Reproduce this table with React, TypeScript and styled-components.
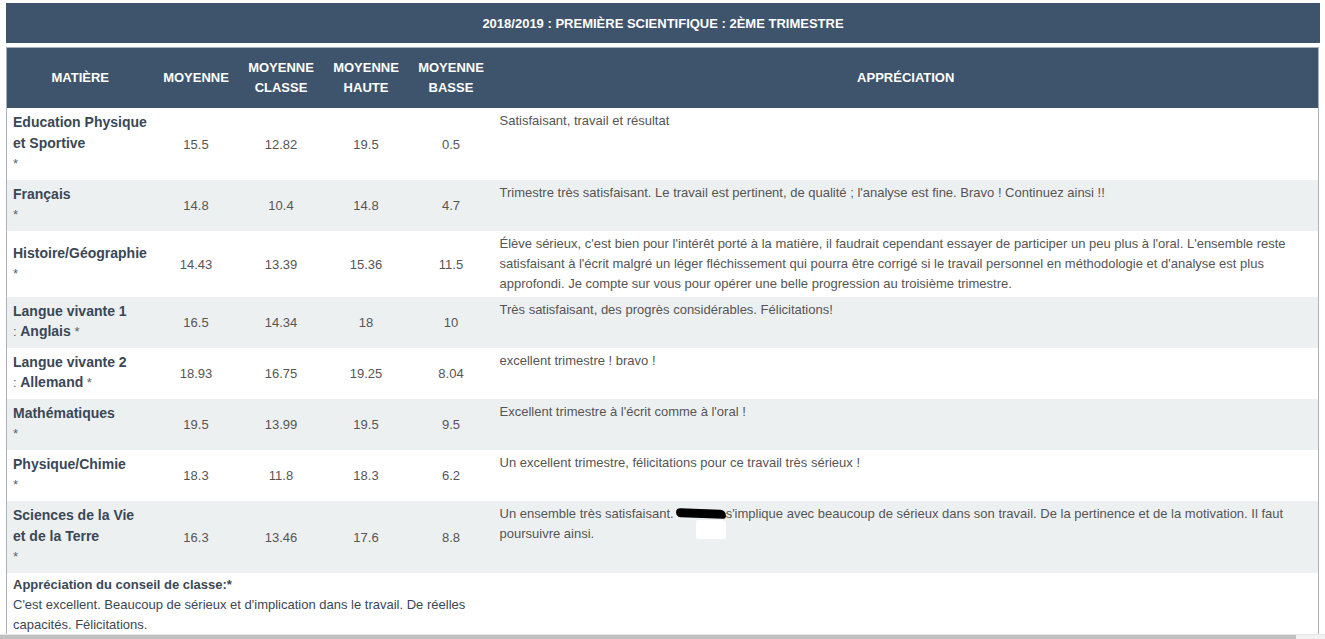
import React from "react";
import styled, { createGlobalStyle } from "styled-components";

const Global = createGlobalStyle`
  html, body { margin: 0; padding: 0; background: #fff; }
  body { font-family: "Liberation Sans", Arial, sans-serif; overflow: hidden; }
`;

const Page = styled.div`
  height: 639px;
  display: flex;
  flex-direction: column;
`;

const Content = styled.div`
  flex: 1;
  overflow: hidden;
  padding: 3px 6px 0 6px;
`;

const TitleBar = styled.div`
  height: 40px;
  width: 1314px;
  background: #3e546c;
  color: #fff;
  font-family: "Liberation Sans Narrow", "Liberation Sans", sans-serif;
  font-weight: bold;
  font-size: 13px;
  display: flex;
  align-items: center;
  justify-content: center;
`;

const Table = styled.table`
  margin-top: 4px;
  width: 1313px;
  table-layout: fixed;
  border-collapse: collapse;
  border: 1px solid #a9b1bc;
  border-bottom: none;
`;

const Th = styled.th<{ $narrow?: boolean }>`
  background: #3e546c;
  color: #fff;
  font-weight: bold;
  font-size: 13px;
  text-transform: uppercase;
  line-height: 20px;
  height: 60px;
  padding: 0 4px;
  text-align: center;
  vertical-align: middle;
  font-family: ${(p) =>
    p.$narrow ? `"Liberation Sans Narrow", "Liberation Sans", sans-serif` : "inherit"};
`;

const Tr = styled.tr<{ $alt?: boolean }>`
  background: ${(p) => (p.$alt ? "#edf0f1" : "#fff")};
`;

const SubjectCell = styled.td`
  padding: 4px 6px 6px 6px;
  vertical-align: middle;
  font-size: 13px;
  line-height: 20px;
  color: #3a4756;
`;

const SubjectName = styled.div`
  font-weight: bold;
  font-size: 14px;
  line-height: 20px;
  & + & {
    margin-top: 1px;
  }
`;

const Star = styled.div`
  color: #5a6470;
  line-height: 21px;
  b {
    color: #3a4756;
    font-size: 14px;
  }
`;

const NumCell = styled.td`
  text-align: center;
  vertical-align: middle;
  font-size: 13px;
  color: #555;
  padding: 0 4px;
`;

const ApprCell = styled.td`
  vertical-align: top;
  padding: 3px 6px 3px 6px;
  font-family: "Liberation Sans Narrow", "Liberation Sans", sans-serif;
  font-size: 13px;
  line-height: 20px;
  color: #555;
`;

const Redact = styled.span`
  display: inline-block;
  position: relative;
  width: 52px;
  height: 12px;
  vertical-align: middle;
  &::before {
    content: "";
    position: absolute;
    left: 2px;
    top: 0px;
    width: 50px;
    height: 9px;
    background: #000;
    border-radius: 5px 7px 3px 6px;
    transform: rotate(2deg);
  }
  &::after {
    content: "";
    position: absolute;
    left: 22px;
    top: 11px;
    width: 30px;
    height: 19px;
    background: #fff;
    border-radius: 2px 4px 2px 2px;
  }
`;

const ConseilCell = styled.td`
  padding: 2px 6px 4px 6px;
  font-size: 13px;
  line-height: 20px;
  color: #3a4756;
  vertical-align: top;
`;

const ConseilTitle = styled.div`
  font-weight: bold;
`;

const ScrollTrack = styled.div`
  height: 4px;
  background: #f1f1f1;
  border-top: 1px solid #e6e6e6;
  display: flex;
`;

const ScrollThumb = styled.div`
  width: 1296px;
  background: #c1c1c1;
`;

type Row = {
  name: string[];
  extra?: React.ReactNode;
  vals: string[];
  appr: React.ReactNode;
};

const rows: Row[] = [
  { name: ["Education Physique", "et Sportive"], vals: ["15.5", "12.82", "19.5", "0.5"], appr: "Satisfaisant, travail et résultat" },
  { name: ["Français"], vals: ["14.8", "10.4", "14.8", "4.7"], appr: "Trimestre très satisfaisant. Le travail est pertinent, de qualité ; l'analyse est fine. Bravo ! Continuez ainsi !!" },
  { name: ["Histoire/Géographie"], vals: ["14.43", "13.39", "15.36", "11.5"], appr: "Élève sérieux, c'est bien pour l'intérêt porté à la matière, il faudrait cependant essayer de participer un peu plus à l'oral. L'ensemble reste satisfaisant à l'écrit malgré un léger fléchissement qui pourra être corrigé si le travail personnel en méthodologie et d'analyse est plus approfondi. Je compte sur vous pour opérer une belle progression au troisième trimestre." },
  { name: ["Langue vivante 1"], extra: <>: <b>Anglais</b> *</>, vals: ["16.5", "14.34", "18", "10"], appr: "Très satisfaisant, des progrès considérables. Félicitations!" },
  { name: ["Langue vivante 2"], extra: <>: <b>Allemand</b> *</>, vals: ["18.93", "16.75", "19.25", "8.04"], appr: "excellent trimestre ! bravo !" },
  { name: ["Mathématiques"], vals: ["19.5", "13.99", "19.5", "9.5"], appr: "Excellent trimestre à l'écrit comme à l'oral !" },
  { name: ["Physique/Chimie"], vals: ["18.3", "11.8", "18.3", "6.2"], appr: "Un excellent trimestre, félicitations pour ce travail très sérieux !" },
  {
    name: ["Sciences de la Vie", "et de la Terre"],
    vals: ["16.3", "13.46", "17.6", "8.8"],
    appr: (
      <>
        Un ensemble très satisfaisant.<Redact />s'implique avec beaucoup de sérieux dans son travail. De la pertinence et de la motivation. Il faut poursuivre ainsi.
      </>
    ),
  },
];

export default function App() {
  return (
    <>
      <Global />
      <Page>
        <Content>
          <TitleBar>2018/2019 : PREMIÈRE SCIENTIFIQUE : 2ÈME TRIMESTRE</TitleBar>
          <Table>
            <colgroup>
              <col style={{ width: 147 }} />
              <col style={{ width: 85 }} />
              <col style={{ width: 85 }} />
              <col style={{ width: 85 }} />
              <col style={{ width: 85 }} />
              <col />
            </colgroup>
            <thead>
              <tr>
                <Th>Matière</Th>
                <Th>Moyenne</Th>
                <Th>Moyenne<br />Classe</Th>
                <Th>Moyenne<br />Haute</Th>
                <Th>Moyenne<br />Basse</Th>
                <Th $narrow>Appréciation</Th>
              </tr>
            </thead>
            <tbody>
              {rows.map((r, i) => (
                <Tr key={i} $alt={i % 2 === 1}>
                  <SubjectCell>
                    {r.name.map((n) => (
                      <SubjectName key={n}>{n}</SubjectName>
                    ))}
                    <Star>{r.extra ?? "*"}</Star>
                  </SubjectCell>
                  {r.vals.map((v, j) => (
                    <NumCell key={j}>{v}</NumCell>
                  ))}
                  <ApprCell>{r.appr}</ApprCell>
                </Tr>
              ))}
              <Tr>
                <ConseilCell colSpan={5}>
                  <ConseilTitle>Appréciation du conseil de classe:*</ConseilTitle>
                  C'est excellent. Beaucoup de sérieux et d'implication dans le travail. De réelles capacités. Félicitations.
                </ConseilCell>
                <ConseilCell />
              </Tr>
            </tbody>
          </Table>
        </Content>
        <ScrollTrack>
          <ScrollThumb />
        </ScrollTrack>
      </Page>
    </>
  );
}
